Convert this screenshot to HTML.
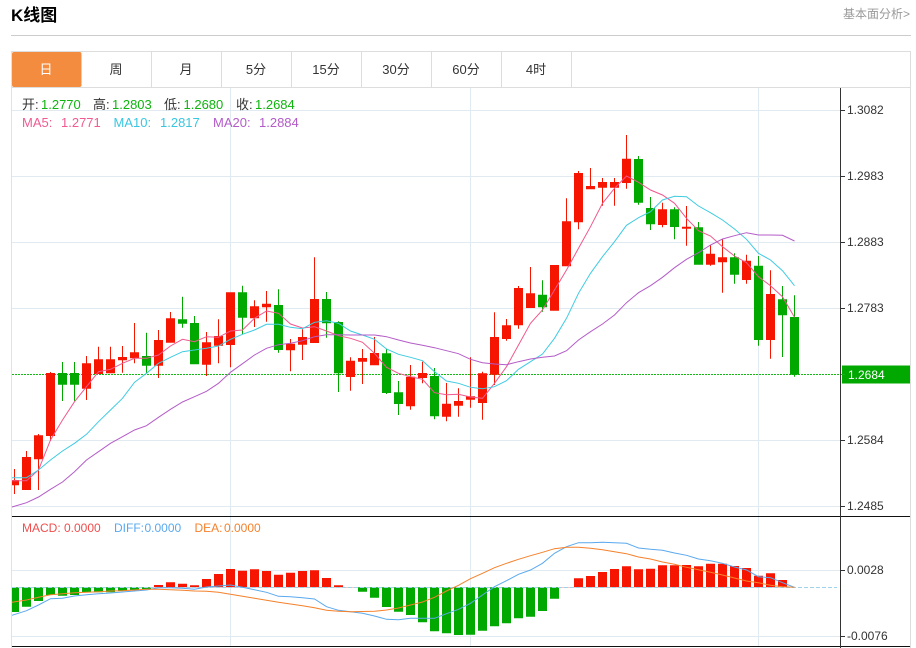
<!DOCTYPE html>
<html lang="zh">
<head>
<meta charset="utf-8">
<title>K线图</title>
<style>
html,body{margin:0;padding:0;background:#fff;width:916px;height:648px;overflow:hidden}
svg{display:block}
text{font-family:"Liberation Sans","Noto Sans CJK SC",sans-serif;font-size:12px}
.tab{font-size:13px;fill:#333;text-anchor:middle}
.ax{fill:#333}
.i{font-size:13px}
</style>
</head>
<body>
<svg width="916" height="648" viewBox="0 0 916 648" xmlns="http://www.w3.org/2000/svg">
<text x="11" y="21" style="font-size:17px;font-weight:bold" fill="#000">K线图</text>
<text x="843" y="18" fill="#999">基本面分析&gt;</text>
<rect x="11" y="35" width="900" height="1" fill="#ccc"/>

<!-- tabs -->
<rect x="11" y="51" width="900" height="1" fill="#ddd"/>
<rect x="11" y="87" width="900" height="1" fill="#ddd"/>
<rect x="11" y="51" width="1" height="597" fill="#dde3e8"/>
<rect x="910" y="51" width="1" height="597" fill="#ddd"/>
<path d="M151.500 52V87M221.500 52V87M291.500 52V87M361.500 52V87M431.500 52V87M501.500 52V87M571.500 52V87" stroke="#ddd" stroke-width="1" fill="none"/>
<rect x="12" y="52" width="69.500" height="35" rx="2" fill="#f48c3f"/>
<text class="tab" x="46" y="74" style="fill:#fff">日</text>
<text class="tab" x="116" y="74">周</text>
<text class="tab" x="186" y="74">月</text>
<text class="tab" x="256" y="74">5分</text>
<text class="tab" x="326" y="74">15分</text>
<text class="tab" x="396" y="74">30分</text>
<text class="tab" x="466" y="74">60分</text>
<text class="tab" x="536" y="74">4时</text>

<!-- grid -->
<path d="M12 110.500H840M12 176.500H840M12 242.500H840M12 308.500H840M12 440.500H840M12 506.500H840M12 570.500H840M12 636.500H840M230.500 88V646M470.500 88V646M758.500 88V646" stroke="#e2eaf1" stroke-width="1" fill="none"/>

<!-- price line -->
<path d="M12 374.500H842" stroke="#12b912" stroke-width="1" stroke-dasharray="2 1" fill="none"/>

<!-- red candles -->
<path fill="#f51500" d="
M12 480h7v5.300h-7zM14 469h1v25h-1z
M22 457h9v33h-9zM26 451h1v39h-1z
M34 435.300h9v24h-9zM38 434h1v56h-1z
M46 373h9v63h-9zM50 372h1v69h-1z
M82 363.300h9v25.400h-9zM86 356h1v44h-1z
M94 359.300h9v14.700h-9zM98 346.700h1v27.300h-1z
M106 359.300h9v14h-9zM110 346.700h1v26.300h-1z
M118 357h9v3.300h-9zM122 346h1v26.700h-1z
M130 352.300h9v6h-9zM134 323h1v40.300h-1z
M154 340h9v25.700h-9zM158 330h1v48h-1z
M166 318.300h9v24.400h-9zM170 312h1v30.700h-1z
M202 342.300h9v22.400h-9zM206 332h1v44h-1z
M214 336h9v9.700h-9zM218 319.300h1v44h-1z
M226 292.300h9v52.700h-9zM230 292.300h1v75h-1z
M250 306.300h9v12h-9zM254 300.300h1v26.700h-1z
M262 303.700h9v3.600h-9zM266 291h1v30.700h-1z
M286 343.700h9v6.600h-9zM290 339h1v32.300h-1z
M298 337h9v7.700h-9zM302 329.300h1v30.700h-1z
M310 299h9v44h-9zM314 257.300h1v85.700h-1z
M346 360.700h9v16.300h-9zM350 357.300h1v33.400h-1z
M358 358h9v3.700h-9zM362 349h1v35h-1z
M370 353h9v12.300h-9zM374 337h1v28.300h-1z
M406 376.700h9v29.600h-9zM410 365h1v44.700h-1z
M418 373h9v5h-9zM422 361.700h1v21.600h-1z
M442 403.700h9v13h-9zM446 383h1v38.300h-1z
M454 401h9v4.700h-9zM458 388.300h1v28.400h-1z
M466 396.300h9v3.400h-9zM470 357.300h1v50.400h-1z
M478 373.300h9v29.700h-9zM482 371.700h1v48h-1z
M490 337h9v37.700h-9zM494 312.300h1v72.700h-1z
M502 325.300h9v13.700h-9zM506 319h1v21.700h-1z
M514 288h9v37.300h-9zM518 286h1v42.700h-1z
M526 293.300h9v14.700h-9zM530 267h1v41h-1z
M550 265h9v45.700h-9z
M562 221.300h9v45h-9zM566 198.300h1v68h-1z
M574 173h9v49.300h-9zM578 171h1v58.300h-1z
M586 186h9v3.300h-9zM590 168h1v21.300h-1z
M598 182h9v5.700h-9zM602 178h1v27.700h-1z
M610 182h9v5.700h-9zM614 178h1v27.700h-1z
M622 158.700h9v24.300h-9zM626 135h1v53.700h-1z
M658 209.300h9v15.700h-9zM662 202.700h1v24.600h-1z
M682 226.700h9v2h-9zM686 206h1v39.700h-1z
M706 253.700h9v11h-9zM710 245h1v20.700h-1z
M718 257.300h9v5h-9zM722 239.300h1v53.400h-1z
M742 260.700h9v19.300h-9zM746 254.700h1v29h-1z
M766 294h9v46h-9zM770 270.300h1v88.400h-1z"/>

<!-- green candles -->
<path fill="#00a800" d="
M58 373h9v11.700h-9zM62 362h1v39h-1z
M70 373h9v11.700h-9zM74 362h1v39h-1z
M142 356h9v9.700h-9zM146 332.700h1v40.300h-1z
M178 319.300h9v4.400h-9zM182 296.700h1v31h-1z
M190 323h9v41.300h-9zM194 316h1v48.300h-1z
M238 292.300h9v25.400h-9zM242 285.700h1v48.600h-1z
M274 305h9v45h-9zM278 289.300h1v63.400h-1z
M322 299h9v24.300h-9zM326 292h1v45.700h-1z
M334 322h9v51.300h-9zM338 321.300h1v70.700h-1z
M382 353.300h9v39.700h-9zM386 349h1v45h-1z
M394 392.300h9v11.700h-9zM398 381h1v34h-1z
M430 376h9v40.300h-9zM434 368h1v51.300h-1z
M538 294.700h9v12.600h-9zM542 280.300h1v31.400h-1z
M634 159h9v43.700h-9zM638 156h1v48.700h-1z
M646 208h9v16.300h-9zM650 197h1v33h-1z
M670 209.300h9v17.700h-9zM674 207.300h1v32h-1z
M694 227.300h9v37.400h-9zM698 222h1v42.700h-1z
M730 257.300h9v17.400h-9zM734 253.300h1v30.400h-1z
M754 265.700h9v74.300h-9zM758 256h1v89.700h-1z
M778 299.300h9v16h-9zM782 286h1v71h-1z
M790 317h9v57.700h-9zM794 295.300h1v81.400h-1z"/>

<!-- MA lines -->
<polyline fill="none" stroke="#f0588e" stroke-width="1" points="12,480.700 26.500,480.700 38.500,470 50.500,440 62.500,420 74.500,401.700 86.500,386.700 98.500,371.700 110.500,369.300 122.500,363.300 134.500,358.300 146.500,358.300 158.500,355 170.500,346 182.500,339.300 194.500,341.700 206.500,336.700 218.500,337.300 230.500,331 242.500,330 254.500,318.300 266.500,311 278.500,313.300 290.500,324 302.500,328 314.500,326.700 326.500,331 338.500,335.700 350.500,338.300 362.500,342.300 374.500,353.300 386.500,367.300 398.500,373.300 410.500,376.700 422.500,379.300 434.500,392.700 446.500,394.700 458.500,394.300 470.500,397 482.500,398.300 494.500,383.300 506.500,366.700 518.500,345 530.500,323.300 542.500,310 554.500,290 566.500,270 578.500,248.300 590.500,226.700 602.500,203.300 614.500,188.300 626.500,176 638.500,182.300 650.500,190 662.500,195 674.500,203.300 686.500,218.300 698.500,230.700 710.500,236 722.500,246.700 734.500,256 746.500,262.700 758.500,276.700 770.500,285.700 782.500,296.700 794.500,317.300"/>
<polyline fill="none" stroke="#3fcbe2" stroke-width="1" points="12,477.700 26.500,477.700 38.500,470 50.500,460 62.500,451 74.500,443.300 86.500,434.300 98.500,421.700 110.500,410 122.500,398.300 134.500,382.300 146.500,373.300 158.500,363.300 170.500,357.300 182.500,351.700 194.500,350 206.500,348.300 218.500,346 230.500,339.300 242.500,334.300 254.500,330 266.500,324.300 278.500,324.300 290.500,327.300 302.500,328.700 314.500,322.300 326.500,320.700 338.500,323.300 350.500,331 362.500,335 374.500,339.300 386.500,349 398.500,354.300 410.500,357.300 422.500,360.700 434.500,371.700 446.500,381 458.500,383.300 470.500,387.300 482.500,388.700 494.500,386.700 506.500,380.700 518.500,369.300 530.500,361.700 542.500,354 554.500,338.300 566.500,318.300 578.500,293.300 590.500,273.300 602.500,256.700 614.500,241.700 626.500,225.300 638.500,217.700 650.500,211.700 662.500,200 674.500,196.300 686.500,196.700 698.500,206 710.500,212.700 722.500,220 734.500,229 746.500,239.300 758.500,253.300 770.500,260 782.500,270.700 794.500,285.700"/>
<polyline fill="none" stroke="#b45cc8" stroke-width="1" points="12,507 26.500,502.700 38.500,497 50.500,489.300 62.500,482 74.500,471.700 86.500,460 98.500,451.700 110.500,443.300 122.500,436.700 134.500,430 146.500,425.700 158.500,417.300 170.500,409.300 182.500,402 194.500,396.700 206.500,391.300 218.500,383.300 230.500,372.300 242.500,363.700 254.500,355 266.500,348.300 278.500,344.700 290.500,343.300 302.500,340.700 314.500,336.700 326.500,334.700 338.500,334.700 350.500,335 362.500,335 374.500,335 386.500,336.700 398.500,340 410.500,343 422.500,345.300 434.500,347.700 446.500,350.700 458.500,353.700 470.500,359.300 482.500,362.700 494.500,364 506.500,364.700 518.500,361.700 530.500,359 542.500,357.300 554.500,356 566.500,350.700 578.500,340 590.500,331.700 602.500,324 614.500,315 626.500,302.700 638.500,292.700 650.500,285.700 662.500,277.300 674.500,267.700 686.500,259.300 698.500,252.700 710.500,245 722.500,239 734.500,235.700 746.500,232.700 758.500,235 770.500,235 782.500,235.300 794.500,241"/>

<!-- MACD histogram -->
<path fill="#00a800" d="M12 587.300h7V612h-7z
M22 587.300h9V606.700h-9zM34 587.300h9V601h-9zM46 587.300h9V595h-9zM58 587.300h9V595.700h-9zM70 587.300h9V595h-9zM82 587.300h9V592.300h-9zM94 587.300h9V592.300h-9zM106 587.300h9V592.300h-9zM118 587.300h9V591h-9zM130 587.300h9V590h-9zM142 587.300h9V589.300h-9z
M358 587.300h9V591.700h-9zM370 587.300h9V597.700h-9zM382 587.300h9V607h-9zM394 587.300h9V611.700h-9zM406 587.300h9V615h-9zM418 587.300h9V622.300h-9zM430 587.300h9V631.300h-9zM442 587.300h9V633.300h-9zM454 587.300h9V635h-9zM466 587.300h9V634.700h-9zM478 587.300h9V630.700h-9zM490 587.300h9V626.300h-9zM502 587.300h9V623.300h-9zM514 587.300h9V618.300h-9zM526 587.300h9V616.700h-9zM538 587.300h9V611h-9zM550 587.300h9V598.700h-9z"/>
<path fill="#f51500" d="M154 587.300h9V585h-9zM166 587.300h9V582.300h-9zM178 587.300h9V583.700h-9zM190 587.300h9V585.300h-9zM202 587.300h9V579h-9zM214 587.300h9V574h-9zM226 587.300h9V569h-9zM238 587.300h9V570.700h-9zM250 587.300h9V569.300h-9zM262 587.300h9V571h-9zM274 587.300h9V574.700h-9zM286 587.300h9V572.700h-9zM298 587.300h9V571h-9zM310 587.300h9V570.300h-9zM322 587.300h9V578h-9zM334 587.300h9V585.300h-9zM346 587.300h9V587h-9z
M562 587.300h9V587h-9zM574 587.300h9V578.300h-9zM586 587.300h9V576h-9zM598 587.300h9V572h-9zM610 587.300h9V569h-9zM622 587.300h9V566.300h-9zM634 587.300h9V569.300h-9zM646 587.300h9V568.700h-9zM658 587.300h9V565.300h-9zM670 587.300h9V565.300h-9zM682 587.300h9V565h-9zM694 587.300h9V566.300h-9zM706 587.300h9V563.700h-9zM718 587.300h9V563.700h-9zM730 587.300h9V566h-9zM742 587.300h9V568h-9zM754 587.300h9V575.700h-9zM766 587.300h9V573.300h-9zM778 587.300h9V580h-9z"/>
<path d="M12 587.500H837" stroke="#9fd3ea" stroke-width="1" stroke-dasharray="4 2" fill="none"/>

<polyline fill="none" stroke="#5aa9ee" stroke-width="1" points="12,615.300 26.500,610.700 38.500,605 50.500,598.700 62.500,598.300 74.500,596 86.500,594.700 98.500,593.700 110.500,593 122.500,592 134.500,591 146.500,590 158.500,587.700 170.500,587.700 182.500,588.300 194.500,589.300 206.500,587 218.500,586 230.500,585 242.500,587.300 254.500,589.700 266.500,592.300 278.500,596.300 290.500,596.700 302.500,597.700 314.500,599 326.500,606.700 338.500,610.300 350.500,611.700 362.500,613.300 374.500,616 386.500,619.300 398.500,619.700 410.500,618.300 422.500,618.300 434.500,618.300 446.500,613.700 458.500,609.300 470.500,603.300 482.500,595 494.500,586.700 506.500,580.700 518.500,574.300 530.500,570 542.500,563.300 554.500,553.300 566.500,546.700 578.500,542.700 590.500,542.700 602.500,542.300 614.500,542.700 626.500,543.300 638.500,548 650.500,549.300 662.500,550.300 674.500,553 686.500,555.300 698.500,559 710.500,560.700 722.500,563.300 734.500,567 746.500,570 758.500,576.700 770.500,577.700 782.500,582.700 794.500,587.300"/>
<polyline fill="none" stroke="#f5812b" stroke-width="1" points="12,602.300 26.500,600 38.500,597.300 50.500,594.700 62.500,593.700 74.500,592.700 86.500,592.300 98.500,591.700 110.500,591 122.500,590.700 134.500,590 146.500,589.300 158.500,589.300 170.500,589.700 182.500,590.300 194.500,591 206.500,591.300 218.500,592.300 230.500,594.300 242.500,596.300 254.500,598.300 266.500,600.300 278.500,602.300 290.500,604 302.500,605.700 314.500,607.700 326.500,610.300 338.500,611.300 350.500,611.700 362.500,611.500 374.500,611.300 386.500,610 398.500,608 410.500,605 422.500,602 434.500,597.300 446.500,591 458.500,585.300 470.500,578.700 482.500,573.300 494.500,567.700 506.500,563.300 518.500,559.300 530.500,555.700 542.500,552.300 554.500,548.700 566.500,547.300 578.500,547.300 590.500,548.300 602.500,549.700 614.500,551.700 626.500,553.700 638.500,557 650.500,559 662.500,562 674.500,564.300 686.500,567.300 698.500,569.700 710.500,572.300 722.500,575 734.500,578 746.500,581 758.500,582.700 770.500,585.300 782.500,586.700 794.500,587.300"/>

<!-- separators and axis -->
<rect x="12" y="516" width="898" height="1" fill="#111"/>
<rect x="12" y="646" width="898" height="1" fill="#111"/>
<rect x="840" y="88" width="1" height="560" fill="#333"/>
<path d="M841 110.500h4M841 176.500h4M841 242.500h4M841 308.500h4M841 440.500h4M841 506.500h4M841 570.500h4M841 636.500h4" stroke="#333" stroke-width="1" fill="none"/>

<text class="ax" x="847" y="114">1.3082</text>
<text class="ax" x="847" y="180">1.2983</text>
<text class="ax" x="847" y="246">1.2883</text>
<text class="ax" x="847" y="312">1.2783</text>
<text class="ax" x="847" y="444">1.2584</text>
<text class="ax" x="847" y="510">1.2485</text>
<text class="ax" x="847" y="574">0.0028</text>
<text class="ax" x="847" y="640">-0.0076</text>

<rect x="842" y="365.500" width="68" height="18" fill="#00a800"/>
<rect x="841" y="374" width="4" height="1" fill="#12b912"/>
<text x="848" y="379" fill="#fff">1.2684</text>

<!-- info -->
<text class="i" x="22" y="109" fill="#333">开:</text><text class="i" x="41" y="109" fill="#0fb40f">1.2770</text>
<text class="i" x="93" y="109" fill="#333">高:</text><text class="i" x="112" y="109" fill="#0fb40f">1.2803</text>
<text class="i" x="164" y="109" fill="#333">低:</text><text class="i" x="183.500" y="109" fill="#0fb40f">1.2680</text>
<text class="i" x="236" y="109" fill="#333">收:</text><text class="i" x="255" y="109" fill="#0fb40f">1.2684</text>
<text class="i" x="22" y="127" fill="#ef5b92">MA5:</text><text class="i" x="61" y="127" fill="#ef5b92">1.2771</text>
<text class="i" x="113.500" y="127" fill="#3ac6e0">MA10:</text><text class="i" x="160" y="127" fill="#3ac6e0">1.2817</text>
<text class="i" x="213" y="127" fill="#b45cc8">MA20:</text><text class="i" x="259" y="127" fill="#b45cc8">1.2884</text>

<text x="22" y="532" fill="#ef4e4e">MACD:</text><text x="64" y="532" fill="#ef4e4e">0.0000</text>
<text x="114" y="532" fill="#5aa9ee">DIFF:</text><text x="144.500" y="532" fill="#5aa9ee">0.0000</text>
<text x="194.500" y="532" fill="#f5812b">DEA:</text><text x="224" y="532" fill="#f5812b">0.0000</text>
</svg>
</body>
</html>
